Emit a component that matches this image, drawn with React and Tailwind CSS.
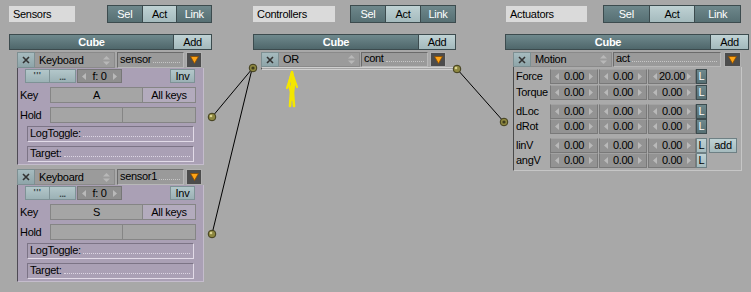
import React from 'react';

const FONT = "font-['Liberation_Sans','DejaVu_Sans',sans-serif]";

function Tri({ left }) {
    return (
        <svg width="4" height="7" viewBox="0 0 4 7" className="shrink-0">
            {left ? <polygon points="4,0 0,3.5 4,7" fill="#b9b9b9" /> : <polygon points="0,0 4,3.5 0,7" fill="#b9b9b9" />}
        </svg>
    );
}

function UpDown() {
    return (
        <svg width="7" height="9" viewBox="0 0 7 9" className="shrink-0">
            <polygon points="3.5,0 7,3.5 0,3.5" fill="#b8b8b8" />
            <polygon points="0,5.5 7,5.5 3.5,9" fill="#b8b8b8" />
        </svg>
    );
}

function SelActLink({ className }) {
    return (
        <div className={`flex h-[18px] border border-[#3c4b4e] ${className}`}>
            <div className="flex-1 flex items-center justify-center bg-linear-to-b from-[#6e888c] to-[#566f73] text-white">Sel</div>
            <div className="flex-1 flex items-center justify-center border-x border-[#3c4b4e] bg-linear-to-b from-[#bfd2d4] to-[#a5bbbe] text-black">Act</div>
            <div className="flex-1 flex items-center justify-center bg-linear-to-b from-[#6e888c] to-[#566f73] text-white">Link</div>
        </div>
    );
}

function Label({ className, children }) {
    return (
        <div className={`h-[16px] mt-px bg-[#dadada] flex items-center pl-[4px] text-black ${className}`}>{children}</div>
    );
}

function CubeBar({ cubeW }) {
    return (
        <div className="flex h-[16px] mt-[11px] border border-[#3c4b4e]">
            <div className={`${cubeW} flex items-center justify-center bg-linear-to-b from-[#6f898d] to-[#4f676b] text-white font-bold`}>Cube</div>
            <div className="flex-1 flex items-center justify-center border-l border-[#3c4b4e] bg-linear-to-b from-[#c0d3d5] to-[#a3b9bc] text-black">Add</div>
        </div>
    );
}

function XBtn() {
    return (
        <div className="w-[18px] h-full flex items-center justify-center bg-linear-to-b from-[#a6bbbf] to-[#8ea5a9] border border-[#7d8f92]">
            <svg width="8" height="8" viewBox="0 0 8 8">
                <path d="M1 1 L7 7 M7 1 L1 7" stroke="#333" strokeWidth="1.6" />
            </svg>
        </div>
    );
}

function Drop({ className, children }) {
    return (
        <div className={`h-full flex items-center justify-between pl-[4px] pr-[4px] bg-[#9b9b9b] border-y border-r border-[#8a8a8a] text-black ${className}`}>
            <span>{children}</span>
            <UpDown />
        </div>
    );
}

function Field({ className, children }) {
    return (
        <div className={`h-full flex items-end pl-[2px] pr-[3px] pb-[2px] bg-[#9a9a9a] border-t border-l border-[#6b6b6b] border-b border-r border-b-[#b8b8b8] border-r-[#b8b8b8] text-black ${className}`}>
            <span className="leading-[12px]">{children}</span>
            <div className="flex-1 mb-[2px] ml-[2px] border-b border-dotted border-[#c6c6c6]"></div>
        </div>
    );
}

function ArrowBtn({ className }) {
    return (
        <div className={`h-full flex items-center justify-center bg-[#4c4c4c] border border-[#b0b0b0] ${className}`}>
            <svg width="9" height="8" viewBox="0 0 9 8">
                <polygon points="0.5,0.5 8.5,0.5 4.5,7.5" fill="#ffa416" stroke="#8a4e00" strokeWidth="0.8" />
            </svg>
        </div>
    );
}

function LogField({ label, className }) {
    return (
        <div className={`h-[16px] ml-[9px] mr-[9px] flex items-end pl-[2px] pr-[3px] pb-[2px] border border-t-[#7c7486] border-l-[#7c7486] border-b-[#e2dbe8] border-r-[#e2dbe8] text-black ${className}`}>
            <span className="leading-[12px]">{label}</span>
            <div className="flex-1 mb-[2px] ml-[2px] border-b border-dotted border-[#ddd6e4]"></div>
        </div>
    );
}

function Sensor({ name, keyName, className }) {
    return (
        <div className={`ml-[8px] w-[187px] ${className}`}>
            <div className="flex h-[16px] gap-[2px]">
                <div className="flex h-full">
                    <XBtn />
                    <Drop className="w-[80px]">Keyboard</Drop>
                </div>
                <Field className="w-[67px]">{name}</Field>
                <ArrowBtn className="w-[16px]" />
            </div>
            <div className="h-[97px] bg-[#aaa0b5] border-l border-l-[#4e4a54] border-r border-r-[#c4bccc] border-b border-b-[#c4bccc] pt-[1px]">
                <div className="flex h-[14px] pl-[7px] pr-[8px]">
                    <div className="w-[25px] flex justify-center items-start pt-px bg-linear-to-b from-[#b3c7ca] to-[#9bb1b5] border border-[#7e9296] text-[#384648] text-[9px] leading-[8px] font-bold tracking-[0.5px]">'''</div>
                    <div className="w-[26px] flex justify-center items-end bg-linear-to-b from-[#b3c7ca] to-[#9bb1b5] border border-l-0 border-[#7e9296] text-[#384648] text-[9px] leading-[10px] font-bold">...</div>
                    <div className="ml-px w-[45px] flex items-center justify-between px-[4px] bg-[#8f8f8f] border border-[#777]">
                        <Tri left />
                        <span className="text-black">f: 0</span>
                        <Tri />
                    </div>
                    <div className="flex-1"></div>
                    <div className="w-[25px] flex items-center justify-center bg-linear-to-b from-[#b3c7ca] to-[#9bb1b5] border border-[#7e9296] text-black">Inv</div>
                </div>
                <div className="flex h-[16px] mt-[4px] items-center">
                    <div className="w-[32px] pl-[2px] text-black">Key</div>
                    <div className="w-[93px] h-full flex items-center justify-center bg-[#a5a5a5] border border-[#858585] text-black">{keyName}</div>
                    <div className="w-[53px] h-full flex items-center justify-center bg-[#b3abbd] border border-l-0 border-[#858585] text-black">All keys</div>
                </div>
                <div className="flex h-[16px] mt-[4px] items-center">
                    <div className="w-[32px] pl-[2px] text-black">Hold</div>
                    <div className="w-[73px] h-full bg-[#a5a5a5] border border-[#858585]"></div>
                    <div className="w-[73px] h-full bg-[#a5a5a5] border border-l-0 border-[#858585]"></div>
                </div>
                <LogField label="LogToggle:" className="mt-[3px]" />
                <LogField label="Target:" className="mt-[4px]" />
            </div>
        </div>
    );
}

function Num({ v }) {
    return (
        <div className="w-[48px] h-full flex items-center justify-between px-[4px] bg-[#939393] border border-[#797979] border-t-[#a2a2a2] text-black">
            <Tri left />
            <span>{v}</span>
            <Tri />
        </div>
    );
}

function LBtn({ dark }) {
    return dark ? (
        <div className="w-[11px] h-full flex items-center justify-center bg-linear-to-b from-[#6e888c] to-[#566f73] border border-[#3c4b4e] text-white">L</div>
    ) : (
        <div className="w-[11px] h-full flex items-center justify-center bg-linear-to-b from-[#bfd2d4] to-[#a5bbbe] border border-[#6e8084] text-black">L</div>
    );
}

function MotionRow({ label, vals, dark, add, className }) {
    return (
        <div className={`flex h-[15px] items-center ${className || ''}`}>
            <div className="w-[36px] pl-[2px] text-black">{label}</div>
            <div className="flex h-full gap-px">
                <Num v={vals[0]} />
                <Num v={vals[1]} />
                <Num v={vals[2]} />
            </div>
            <LBtn dark={dark} />
            {add && (
                <div className="ml-[2px] w-[28px] h-full flex items-center justify-center bg-linear-to-b from-[#bfd2d4] to-[#a5bbbe] border border-[#6e8084] text-black">add</div>
            )}
        </div>
    );
}

function Wires() {
    const dot = (x, y, ring) => (
        <g key={`${x}-${y}`}>
            <circle cx={x} cy={y} r="3.8" fill="#8d8740" stroke="#3f3c1c" strokeWidth="1" />
            {ring ? <circle cx={x} cy={y} r="1.6" fill="#3f3c1c" /> : <circle cx={x - 1} cy={y - 1} r="1.3" fill="#d8d290" />}
        </g>
    );
    return (
        <svg className="absolute inset-0 pointer-events-none" width="751" height="292" viewBox="0 0 751 292">
            <line x1="212" y1="117" x2="252" y2="69" stroke="#000" strokeWidth="1" />
            <line x1="212" y1="234" x2="252" y2="69" stroke="#000" strokeWidth="1" />
            <line x1="457" y1="69" x2="504" y2="122" stroke="#000" strokeWidth="1" />
            {dot(212, 117)}
            {dot(212, 234)}
            {dot(253, 68, true)}
            {dot(457, 69)}
            {dot(504, 122, true)}
            {/* yellow arrow drawn by hand */}
            <path d="M290 106 L291 92 L289 84 L292 72 L294 83 L293 93 L294 106" stroke="#f4e600" strokeWidth="2.6" fill="none" strokeLinecap="round" strokeLinejoin="round" />
            <path d="M292 73 L287 88 M292 73 L297 87 M292 80 L292 100" stroke="#f4e600" strokeWidth="2.2" fill="none" strokeLinecap="round" />
        </svg>
    );
}

export default function App() {
    return (
        <div className={`relative w-[751px] h-[292px] overflow-hidden bg-[#a8a8a8] text-[11px] leading-none tracking-[-0.3px] ${FONT}`}>
            <div className="flex pl-[9px] pt-[5px]">
                {/* Sensors */}
                <div className="w-[203px] flex flex-col">
                    <div className="flex justify-between items-start">
                        <Label className="w-[66px]">Sensors</Label>
                        <SelActLink className="w-[105px]" />
                    </div>
                    <CubeBar cubeW="w-[163px]" />
                    <Sensor name="sensor" keyName="A" className="mt-[2px]" />
                    <Sensor name="sensor1" keyName="S" className="mt-[4px]" />
                </div>

                {/* Controllers */}
                <div className="ml-[41px] w-[203px] flex flex-col">
                    <div className="flex justify-between items-start">
                        <Label className="w-[82px]">Controllers</Label>
                        <SelActLink className="w-[106px]" />
                    </div>
                    <CubeBar cubeW="w-[164px]" />
                    <div className="ml-[8px] mt-[2px] flex h-[15px]">
                        <XBtn />
                        <Drop className="w-[81px]">OR</Drop>
                        <Field className="ml-px w-[67px]">cont</Field>
                        <ArrowBtn className="ml-[2px] w-[16px]" />
                    </div>
                    <div className="ml-[8px] w-[195px] h-[3px] bg-[#a4a4a4] border-t border-t-[#d0d0d0] border-b border-b-[#d0d0d0] border-l border-l-[#555]"></div>
                </div>

                {/* Actuators */}
                <div className="ml-[49px] w-[244px] flex flex-col">
                    <div className="flex justify-between items-start">
                        <Label className="ml-px w-[81px]">Actuators</Label>
                        <SelActLink className="mr-[8px] w-[138px]" />
                    </div>
                    <CubeBar cubeW="w-[204px]" />
                    <div className="ml-[8px] mt-[2px] flex h-[15px]">
                        <XBtn />
                        <Drop className="w-[81px]">Motion</Drop>
                        <Field className="ml-px w-[108px]">act</Field>
                        <ArrowBtn className="ml-[3px] w-[17px]" />
                    </div>
                    <div className="ml-[8px] w-[229px] h-[104px] bg-[#aaaaaa] border-l border-l-[#4a4a4a] border-r border-r-[#c6c6c6] border-b border-b-[#c6c6c6] pt-[2px]">
                        <MotionRow label="Force" vals={['0.00', '0.00', '20.00']} dark />
                        <MotionRow label="Torque" vals={['0.00', '0.00', '0.00']} dark className="mt-px" />
                        <MotionRow label="dLoc" vals={['0.00', '0.00', '0.00']} dark className="mt-[4px]" />
                        <MotionRow label="dRot" vals={['0.00', '0.00', '0.00']} dark />
                        <MotionRow label="linV" vals={['0.00', '0.00', '0.00']} add className="mt-[4px]" />
                        <MotionRow label="angV" vals={['0.00', '0.00', '0.00']} />
                    </div>
                </div>
            </div>
            <Wires />
        </div>
    );
}
